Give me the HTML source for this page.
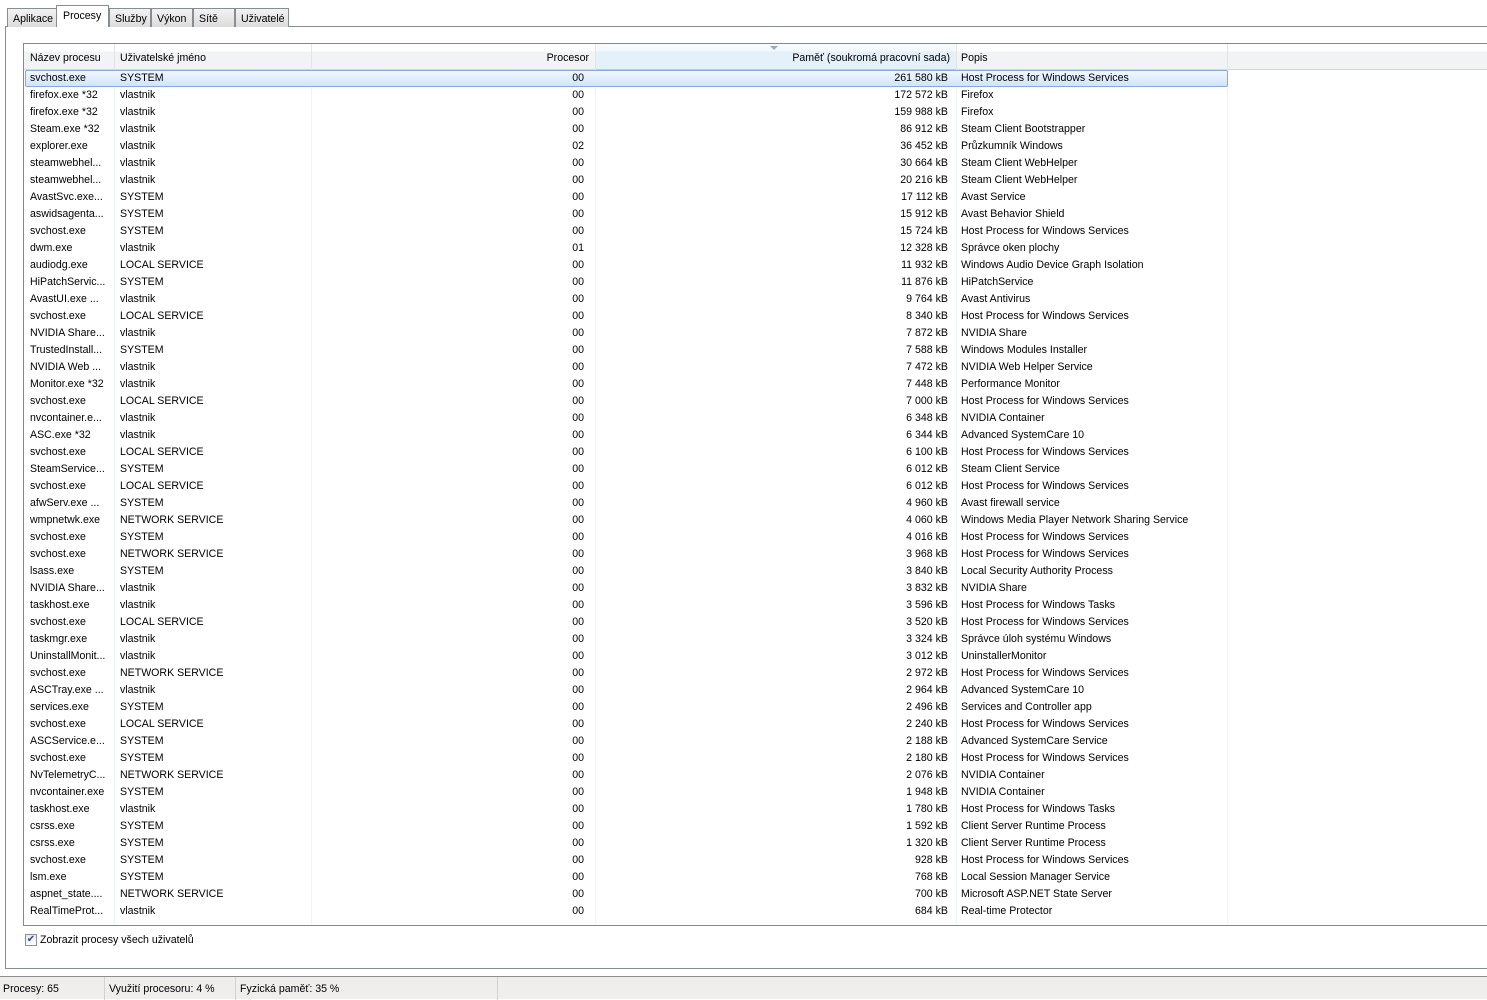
<!DOCTYPE html>
<html><head><meta charset="utf-8"><style>
*{margin:0;padding:0;box-sizing:border-box}
body{width:1487px;height:999px;background:#fff;font-family:"Liberation Sans","DejaVu Sans",sans-serif;font-size:10.6px;color:#000;position:relative;overflow:hidden}
.tab{position:absolute;top:8px;height:19px;border:1px solid #898c95;border-bottom:none;background:linear-gradient(#f2f2f2,#dcdcdc);padding:4px 0 0 5px;font-size:10.6px}
.tab.sel{top:5px;height:22px;background:#fff;z-index:2;padding-top:4px}
#panel{position:absolute;left:5px;top:26px;width:1490px;height:943px;border:1px solid #898c95;background:#fff}
#list{position:absolute;left:23px;top:43px;width:1470px;height:883px;border:1px solid #828790;border-right:none;background:#fff;overflow:hidden}
#hdr{position:absolute;left:0;top:0;width:1470px;height:26px;background:linear-gradient(#fff 0,#fff 30%,#f2f3f5 31%,#f2f3f5 100%);border-bottom:1px solid #d5d5d5}
.h{position:absolute;top:8px}
.vd{position:absolute;top:0;width:1px;height:26px;background:#e3e4e6}
.cl{position:absolute;top:26px;width:1px;height:860px;background:#f0f4fa}
.r{position:absolute;left:0;width:1470px;height:17px;line-height:17px}
.r span{position:absolute;top:0;white-space:nowrap}
.a{left:6px}.b{left:96px}.c{right:910px}.d{right:546px}.e{left:937px}
#sel{position:absolute;left:1px;top:26px;width:1203px;height:17px;border:1px solid #84acdd;border-radius:2px;background:linear-gradient(#f1f7fe,#cfe4fd)}
#status{position:absolute;left:0;top:976px;width:1487px;height:23px;background:#f0eded;border-top:1px solid #8e8e8e}
#status span{position:absolute;top:6px}
.sd{position:absolute;top:0;width:1px;height:23px;background:#d2d2d2}
</style></head><body>
<div id="panel"></div>
<div class="tab" style="left:7px;width:50px">Aplikace</div>
<div class="tab sel" style="left:56px;width:53px;padding-left:6px">Procesy</div>
<div class="tab" style="left:109px;width:42px">Služby</div>
<div class="tab" style="left:151px;width:42px">Výkon</div>
<div class="tab" style="left:193px;width:42px">Sítě</div>
<div class="tab" style="left:235px;width:54px">Uživatelé</div>
<div id="list">
<div id="hdr">
<span class="h" style="left:6px">Název procesu</span>
<span class="h" style="left:96px">Uživatelské jméno</span>
<span class="h" style="right:905px">Procesor</span>
<div style="position:absolute;left:572px;top:0;width:360px;height:26px;background:linear-gradient(#f7fbfe 0,#f2f8fd 30%,#e4f1fb 31%,#e4f1fb 100%);border-bottom:1px solid #96d9f9"></div>
<div style="position:absolute;left:746px;top:2px;width:0;height:0;border-left:4px solid transparent;border-right:4px solid transparent;border-top:4px solid #97a9c4"></div>
<span class="h" style="right:544px">Paměť (soukromá pracovní sada)</span>
<span class="h" style="left:937px">Popis</span>
<div class="vd" style="left:90px"></div><div class="vd" style="left:287px"></div><div class="vd" style="left:571px"></div><div class="vd" style="left:932px"></div><div class="vd" style="left:1203px"></div>
</div>
<div class="cl" style="left:90px"></div><div class="cl" style="left:287px"></div><div class="cl" style="left:571px"></div><div class="cl" style="left:932px"></div><div class="cl" style="left:1203px"></div>
<div id="sel"></div>
<div id="rows"></div>
</div>
<div style="position:absolute;left:25px;top:934px;width:12px;height:12px;border:1px solid #8e8f8f;background:linear-gradient(#e8e8e8,#fff);font-size:10px;line-height:10px;text-align:center;color:#2a4d96">✔</div>
<span style="position:absolute;left:40px;top:934px">Zobrazit procesy všech uživatelů</span>
<div id="status">
<span style="left:3px">Procesy: 65</span><div class="sd" style="left:104px"></div>
<span style="left:109px">Využití procesoru: 4 %</span><div class="sd" style="left:235px"></div>
<span style="left:240px">Fyzická paměť: 35 %</span><div class="sd" style="left:497px"></div>
</div>
<script>
var d=[
["svchost.exe","SYSTEM","00","261 580 kB","Host Process for Windows Services"],
["firefox.exe *32","vlastnik","00","172 572 kB","Firefox"],
["firefox.exe *32","vlastnik","00","159 988 kB","Firefox"],
["Steam.exe *32","vlastnik","00","86 912 kB","Steam Client Bootstrapper"],
["explorer.exe","vlastnik","02","36 452 kB","Průzkumník Windows"],
["steamwebhel...","vlastnik","00","30 664 kB","Steam Client WebHelper"],
["steamwebhel...","vlastnik","00","20 216 kB","Steam Client WebHelper"],
["AvastSvc.exe...","SYSTEM","00","17 112 kB","Avast Service"],
["aswidsagenta...","SYSTEM","00","15 912 kB","Avast Behavior Shield"],
["svchost.exe","SYSTEM","00","15 724 kB","Host Process for Windows Services"],
["dwm.exe","vlastnik","01","12 328 kB","Správce oken plochy"],
["audiodg.exe","LOCAL SERVICE","00","11 932 kB","Windows Audio Device Graph Isolation"],
["HiPatchServic...","SYSTEM","00","11 876 kB","HiPatchService"],
["AvastUI.exe ...","vlastnik","00","9 764 kB","Avast Antivirus"],
["svchost.exe","LOCAL SERVICE","00","8 340 kB","Host Process for Windows Services"],
["NVIDIA Share...","vlastnik","00","7 872 kB","NVIDIA Share"],
["TrustedInstall...","SYSTEM","00","7 588 kB","Windows Modules Installer"],
["NVIDIA Web ...","vlastnik","00","7 472 kB","NVIDIA Web Helper Service"],
["Monitor.exe *32","vlastnik","00","7 448 kB","Performance Monitor"],
["svchost.exe","LOCAL SERVICE","00","7 000 kB","Host Process for Windows Services"],
["nvcontainer.e...","vlastnik","00","6 348 kB","NVIDIA Container"],
["ASC.exe *32","vlastnik","00","6 344 kB","Advanced SystemCare 10"],
["svchost.exe","LOCAL SERVICE","00","6 100 kB","Host Process for Windows Services"],
["SteamService...","SYSTEM","00","6 012 kB","Steam Client Service"],
["svchost.exe","LOCAL SERVICE","00","6 012 kB","Host Process for Windows Services"],
["afwServ.exe ...","SYSTEM","00","4 960 kB","Avast firewall service"],
["wmpnetwk.exe","NETWORK SERVICE","00","4 060 kB","Windows Media Player Network Sharing Service"],
["svchost.exe","SYSTEM","00","4 016 kB","Host Process for Windows Services"],
["svchost.exe","NETWORK SERVICE","00","3 968 kB","Host Process for Windows Services"],
["lsass.exe","SYSTEM","00","3 840 kB","Local Security Authority Process"],
["NVIDIA Share...","vlastnik","00","3 832 kB","NVIDIA Share"],
["taskhost.exe","vlastnik","00","3 596 kB","Host Process for Windows Tasks"],
["svchost.exe","LOCAL SERVICE","00","3 520 kB","Host Process for Windows Services"],
["taskmgr.exe","vlastnik","00","3 324 kB","Správce úloh systému Windows"],
["UninstallMonit...","vlastnik","00","3 012 kB","UninstallerMonitor"],
["svchost.exe","NETWORK SERVICE","00","2 972 kB","Host Process for Windows Services"],
["ASCTray.exe ...","vlastnik","00","2 964 kB","Advanced SystemCare 10"],
["services.exe","SYSTEM","00","2 496 kB","Services and Controller app"],
["svchost.exe","LOCAL SERVICE","00","2 240 kB","Host Process for Windows Services"],
["ASCService.e...","SYSTEM","00","2 188 kB","Advanced SystemCare Service"],
["svchost.exe","SYSTEM","00","2 180 kB","Host Process for Windows Services"],
["NvTelemetryC...","NETWORK SERVICE","00","2 076 kB","NVIDIA Container"],
["nvcontainer.exe","SYSTEM","00","1 948 kB","NVIDIA Container"],
["taskhost.exe","vlastnik","00","1 780 kB","Host Process for Windows Tasks"],
["csrss.exe","SYSTEM","00","1 592 kB","Client Server Runtime Process"],
["csrss.exe","SYSTEM","00","1 320 kB","Client Server Runtime Process"],
["svchost.exe","SYSTEM","00","928 kB","Host Process for Windows Services"],
["lsm.exe","SYSTEM","00","768 kB","Local Session Manager Service"],
["aspnet_state....","NETWORK SERVICE","00","700 kB","Microsoft ASP.NET State Server"],
["RealTimeProt...","vlastnik","00","684 kB","Real-time Protector"]];
var h="";d.forEach(function(r,i){h+='<div class="r" style="top:'+(26+i*17)+'px"><span class="a">'+r[0]+'</span><span class="b">'+r[1]+'</span><span class="c">'+r[2]+'</span><span class="d">'+r[3]+'</span><span class="e">'+r[4]+'</span></div>';});
document.getElementById("rows").innerHTML=h;
</script>
</body></html>
